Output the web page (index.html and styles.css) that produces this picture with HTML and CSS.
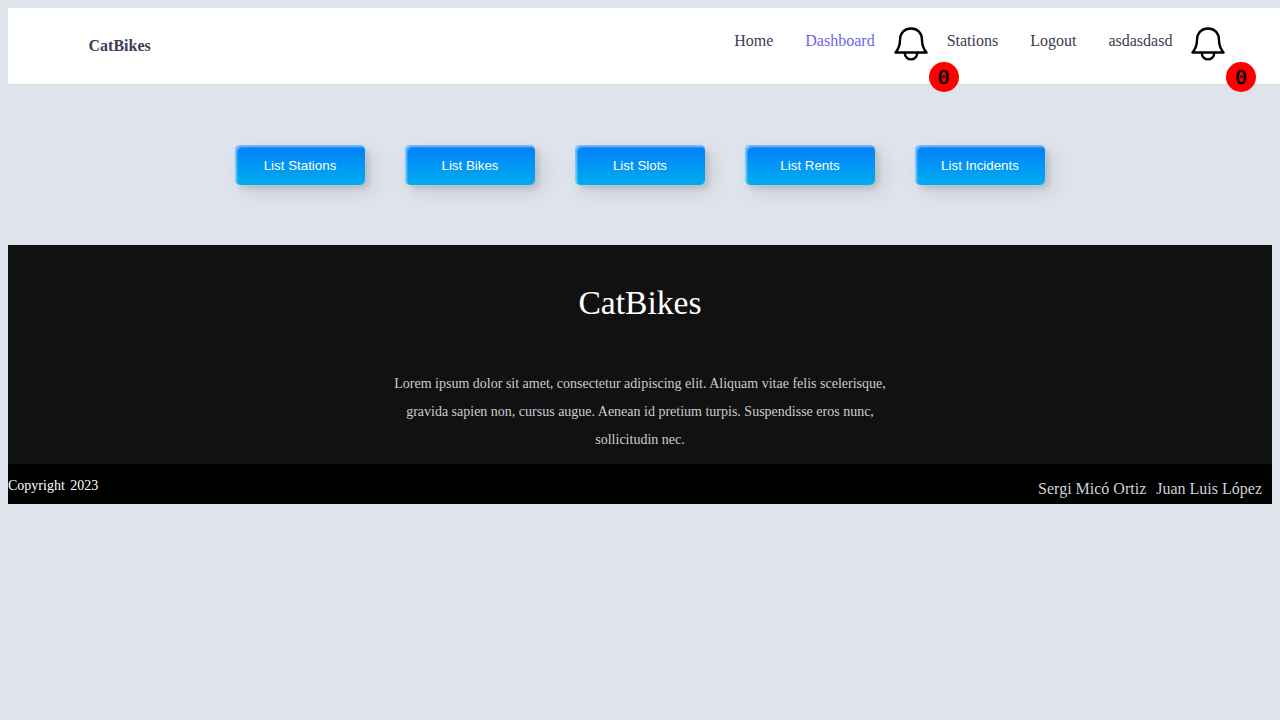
FILE: index.html
```html
<!DOCTYPE html>
<html lang="en">
<head>
<meta charset="utf-8">
<title>CatBikes</title>
<link rel="stylesheet" href="styles.css">
</head>
<body>
<header class="header">
  <a class="brand">CatBikes</a>
  <nav class="nav">
    <a class="link">Home</a>
    <a class="link active">Dashboard</a>
    <span class="bell">
      <svg viewBox="0 0 34 34" width="34" height="34"><path d="M1.500 25.500C5 21.500 6 18.500 6 13C6 6 10.500 1.500 17 1.500S28 6 28 13C28 18.500 29 21.500 32.500 25.500ZM10.800 26.200a6.200 6.200 0 0 0 12.400 0"/></svg>
      <span class="badge">0</span>
    </span>
    <a class="link">Stations</a>
    <a class="link">Logout</a>
    <a class="link">asdasdasd</a>
    <span class="bell">
      <svg viewBox="0 0 34 34" width="34" height="34"><path d="M1.500 25.500C5 21.500 6 18.500 6 13C6 6 10.500 1.500 17 1.500S28 6 28 13C28 18.500 29 21.500 32.500 25.500ZM10.800 26.200a6.200 6.200 0 0 0 12.400 0"/></svg>
      <span class="badge">0</span>
    </span>
  </nav>
</header>
<main class="actions">
  <button class="btn">List Stations</button>
  <button class="btn">List Bikes</button>
  <button class="btn">List Slots</button>
  <button class="btn">List Rents</button>
  <button class="btn">List Incidents</button>
</main>
<footer class="footer">
  <div class="about">
    <h3 class="title">CatBikes</h3>
    <p class="text">Lorem ipsum dolor sit amet, consectetur adipiscing elit. Aliquam vitae felis scelerisque, gravida sapien non, cursus augue. Aenean id pretium turpis. Suspendisse eros nunc, sollicitudin nec.</p>
  </div>
  <div class="bottom">
    <p class="copy">Copyright 2023</p>
    <div class="authors"><a>Sergi Micó Ortiz</a><a>Juan Luis López</a></div>
  </div>
</footer>
</body>
</html>
```
FILE: styles.css
```css
* { box-sizing: border-box; }
body {
  margin: 0;
  padding: 8px 0 0 8px;
  background: #dfe4ec;
  font-family: "Liberation Serif", "Times New Roman", serif;
  font-size: 16px;
}
.header {
  display: flex;
  justify-content: space-between;
  height: 76px;
  padding: 0 55px 0 80.5px;
  background: #fff;
  box-shadow: 0 1px 1px rgba(0, 0, 0, 0.04);
}
.brand {
  padding-top: 28px;
  color: #393e55;
  font-weight: bold;
  line-height: 20px;
}
.nav {
  display: flex;
  align-items: flex-start;
  padding-top: 19px;
}
.link {
  margin-right: 32px;
  color: #393e55;
  line-height: 28px;
}
.link.active { color: #6a64f1; }
.bell {
  position: relative;
  width: 34px;
  height: 34px;
  margin: 0 19px 0 -13px;
}
.bell:last-child { margin: 0 0 0 -13.4px; }
.bell svg {
  display: block;
  fill: none;
  stroke: #000;
  stroke-width: 2.4;
  stroke-linejoin: round;
}
.badge {
  position: absolute;
  left: 35px;
  top: 35px;
  width: 30px;
  height: 30px;
  border-radius: 50%;
  background: #f00;
  color: #000;
  font: 20px/31px "DejaVu Sans Mono", monospace;
  -webkit-text-stroke: 0.5px #000;
  text-align: center;
}
.actions {
  display: flex;
  justify-content: center;
  gap: 40px;
  margin-right: 8px;
  padding: 61px 0 60px;
}
.btn {
  width: 130px;
  height: 40px;
  padding: 0;
  border: 0;
  border-radius: 5px;
  background: linear-gradient(0deg, #00acee 0%, #027efb 100%);
  box-shadow: inset 2px 2px 2px 0 rgba(255, 255, 255, 0.5), 7px 7px 20px 0 rgba(0, 0, 0, 0.1), 4px 4px 5px 0 rgba(0, 0, 0, 0.1);
  color: #fff;
  font: 13.333px "Liberation Sans", Arial, sans-serif;
}
.footer {
  margin-right: 8px;
  background: #111;
  color: #fff;
}
.about {
  height: 219px;
  padding-top: 38px;
  text-align: center;
}
.title {
  margin: 0;
  font-size: 33.6px;
  font-weight: 400;
  line-height: 40px;
}
.text {
  width: 500px;
  margin: 47px auto 0;
  color: #cacdd2;
  font-size: 14px;
  line-height: 28px;
}
.bottom {
  display: flex;
  justify-content: space-between;
  height: 40px;
  background: #000;
}
.copy {
  margin: 0;
  padding-top: 13px;
  font-size: 14px;
  line-height: 18px;
  word-spacing: 2px;
}
.authors {
  display: flex;
  gap: 10px;
  padding: 15px 10px 0 0;
  color: #cfd2d6;
  line-height: 20px;
}
```
